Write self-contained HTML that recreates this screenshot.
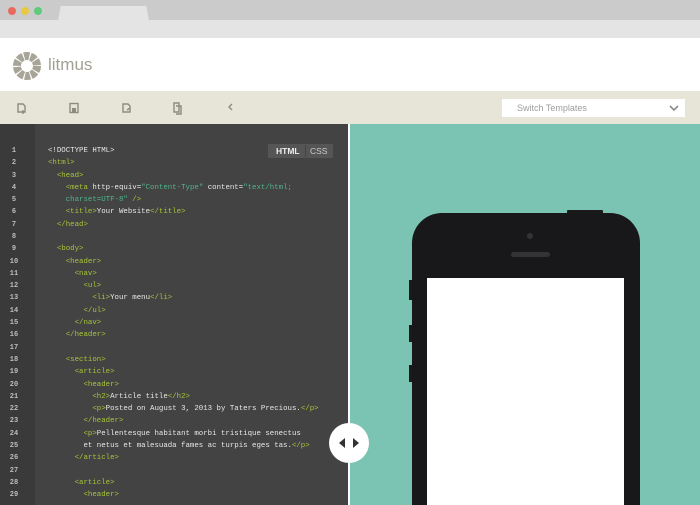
<!DOCTYPE html>
<html style="overflow:hidden;width:700px;height:505px"><head><style>
*{margin:0;padding:0;box-sizing:border-box}
body{width:700px;height:505px;overflow:hidden;position:relative;background:#fff;font-family:"Liberation Sans",sans-serif}
.a{position:absolute}
.code{font-family:"Liberation Mono",monospace;font-size:7.4px;color:#e8e8e8;white-space:pre;left:48px}
.ln{font-family:"Liberation Mono",monospace;font-size:7px;color:#bdbdbd;left:3px;width:22px;text-align:center;font-weight:bold}
.t{color:#a6c43a}.s{color:#4fb58c}
</style></head><body>
<div class="a" style="left:0;top:0;width:700px;height:20px;background:#cbcbcb"></div>
<div class="a" style="left:0;top:20px;width:700px;height:18px;background:#e4e4e4"></div>
<div class="a" style="left:58px;top:6px;width:91px;height:15px;background:#e4e4e4;clip-path:polygon(3% 0,97% 0,100% 100%,0 100%);border-radius:3px 3px 0 0"></div>
<div class="a" style="left:8px;top:7px;width:8px;height:8px;border-radius:50%;background:#e86a5f"></div>
<div class="a" style="left:21px;top:7px;width:8px;height:8px;border-radius:50%;background:#e9c842"></div>
<div class="a" style="left:34px;top:7px;width:8px;height:8px;border-radius:50%;background:#5ccb7a"></div>
<svg class="a" style="left:13px;top:52px" width="28" height="28" viewBox="-14 -14 28 28">
<circle r="10" fill="none" stroke="#a7a598" stroke-width="8" stroke-dasharray="5.2 1.08"/>
</svg>
<div class="a" style="left:48px;top:55px;font-size:17px;color:#a3a194">litmus</div>
<div class="a" style="left:0;top:91px;width:700px;height:33px;background:#e7e4d8"></div>
<svg class="a" style="left:0;top:91px" width="260" height="33" stroke="#8d8b80" stroke-width="1.4" fill="none">
<path d="M18 13h5l2 2v6h-7z M21 21h4 M23 19v4"/>
<rect x="70" y="12.5" width="8" height="9"/><rect x="72" y="17" width="4" height="4.5" fill="#8d8b80" stroke="none"/>
<path d="M123 13h5l2 2v6h-7z M127 19l3-2"/>
<path d="M174 12h5v9h-5z M176 15h5v8h-5"/>
<path d="M232 13l-3 3 3 3"/>
</svg>
<div class="a" style="left:502px;top:99px;width:183px;height:18px;background:#fff"></div>
<div class="a" style="left:517px;top:103px;font-size:9px;color:#9d9d9d">Switch Templates</div>
<svg class="a" style="left:669px;top:104px" width="10" height="8"><path d="M1 2l4 4 4-4" stroke="#8a8a8a" stroke-width="1.6" fill="none"/></svg>
<div class="a" style="left:0;top:124px;width:348px;height:381px;background:#434343"></div>
<div class="a" style="left:0;top:124px;width:35px;height:381px;background:#3a3a3a"></div>
<div class="a" style="left:348px;top:124px;width:2px;height:381px;background:#fff"></div>
<div class="a" style="left:350px;top:124px;width:350px;height:381px;background:#7bc4b4"></div>
<div class="a" style="left:268px;top:144px;width:65px;height:14px;background:#555"></div>
<div class="a" style="left:276px;top:146px;font-size:8.5px;color:#eee;font-weight:bold">HTML</div>
<div class="a" style="left:305px;top:145px;width:1px;height:12px;background:#444"></div>
<div class="a" style="left:310px;top:146px;font-size:8.5px;color:#ccc">CSS</div>
<div id="code"></div>
<div class="a" style="left:329px;top:423px;width:40px;height:40px;border-radius:50%;background:#fff"></div>
<svg class="a" style="left:329px;top:423px" width="40" height="40"><path d="M16 15l-6 5 6 5z M24 15l6 5-6 5z" fill="#333"/></svg>
<div class="a" style="left:409px;top:280px;width:4px;height:20px;background:#1a1a1a"></div>
<div class="a" style="left:409px;top:325px;width:4px;height:17px;background:#1a1a1a"></div>
<div class="a" style="left:409px;top:365px;width:4px;height:17px;background:#1a1a1a"></div>
<div class="a" style="left:567px;top:210px;width:36px;height:5px;background:#1a1a1a;border-radius:1px"></div>
<div class="a" style="left:412px;top:213px;width:228px;height:292px;background:#18181a;border-radius:30px 30px 0 0"></div>
<div class="a" style="left:527px;top:233px;width:6px;height:6px;border-radius:50%;background:#333"></div>
<div class="a" style="left:511px;top:252px;width:39px;height:5px;border-radius:3px;background:#333"></div>
<div class="a" style="left:427px;top:278px;width:197px;height:227px;background:#fff"></div>
<script>
var L=[
'<span>&lt;!DOCTYPE HTML&gt;</span>',
'<span class=t>&lt;html&gt;</span>',
'  <span class=t>&lt;head&gt;</span>',
'    <span class=t>&lt;meta</span> http-equiv=<span class=s>"Content-Type"</span> content=<span class=s>"text/html;</span>',
'    <span class=s>charset=UTF-8"</span> <span class=t>/&gt;</span>',
'    <span class=t>&lt;title&gt;</span>Your Website<span class=t>&lt;/title&gt;</span>',
'  <span class=t>&lt;/head&gt;</span>',
'',
'  <span class=t>&lt;body&gt;</span>',
'    <span class=t>&lt;header&gt;</span>',
'      <span class=t>&lt;nav&gt;</span>',
'        <span class=t>&lt;ul&gt;</span>',
'          <span class=t>&lt;li&gt;</span>Your menu<span class=t>&lt;/li&gt;</span>',
'        <span class=t>&lt;/ul&gt;</span>',
'      <span class=t>&lt;/nav&gt;</span>',
'    <span class=t>&lt;/header&gt;</span>',
'',
'    <span class=t>&lt;section&gt;</span>',
'      <span class=t>&lt;article&gt;</span>',
'        <span class=t>&lt;header&gt;</span>',
'          <span class=t>&lt;h2&gt;</span>Article title<span class=t>&lt;/h2&gt;</span>',
'          <span class=t>&lt;p&gt;</span>Posted on August 3, 2013 by Taters Precious.<span class=t>&lt;/p&gt;</span>',
'        <span class=t>&lt;/header&gt;</span>',
'        <span class=t>&lt;p&gt;</span>Pellentesque habitant morbi tristique senectus',
'        et netus et malesuada fames ac turpis eges tas.<span class=t>&lt;/p&gt;</span>',
'      <span class=t>&lt;/article&gt;</span>',
'',
'      <span class=t>&lt;article&gt;</span>',
'        <span class=t>&lt;header&gt;</span>'];
var h='';for(var i=0;i<L.length;i++){var y=147+i*12.29;
h+='<div class="a ln" style="top:'+y+'px">'+(i+1)+'</div><div class="a code" style="top:'+y+'px">'+L[i]+'</div>';}
document.getElementById('code').innerHTML=h;
</script>
</body></html>
